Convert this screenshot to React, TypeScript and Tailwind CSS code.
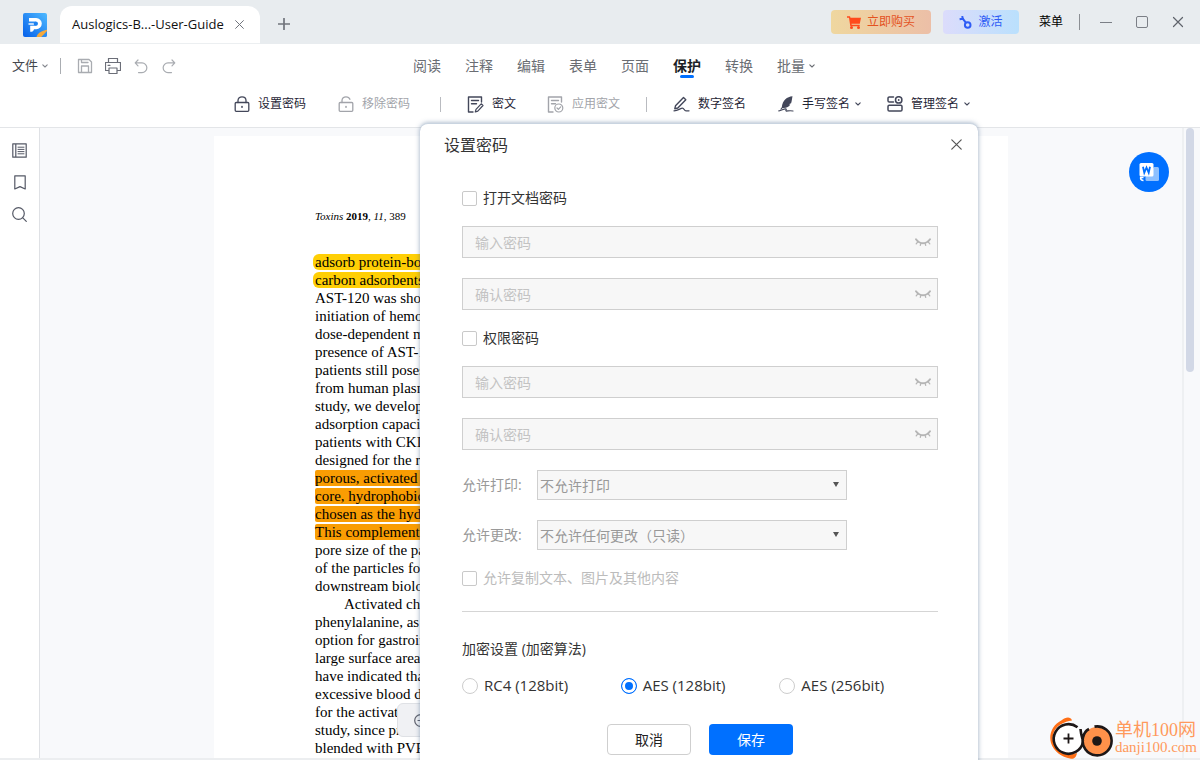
import type { ReactNode } from "react";

const stroke = {
  fill: "none",
  stroke: "currentColor",
  strokeLinecap: "round" as const,
  strokeLinejoin: "round" as const,
};

function Chevron({ className = "" }: { className?: string }) {
  return (
    <svg className={`h-[6px] w-[6px] ${className}`} viewBox="0 0 6 6" {...stroke} strokeWidth={1.1}>
      <path d="M.8 1.8 3 4 5.2 1.8" />
    </svg>
  );
}

function AppLogo() {
  return (
    <svg className="h-6 w-6" viewBox="0 0 24 24" aria-hidden="true">
      <defs>
        <linearGradient id="logo-bg" x1="1" y1="0" x2="0" y2="1">
          <stop offset="0" stopColor="#4fbaff" />
          <stop offset="1" stopColor="#0560ea" />
        </linearGradient>
      </defs>
      <rect width="24" height="24" rx="2" fill="url(#logo-bg)" />
      <path d="M6 5h7.200a5.600 5.600 0 0 1 0 11.200H11c-.2 1.600-1.400 2.600-3.800 2.600v-6h5.600a2.200 2.200 0 0 0 0-4.400H6z" fill="#fff" />
      <path d="M5.500 11h6" stroke="#fff" strokeWidth="1.400" />
      <circle cx="12.600" cy="10.700" r="1.900" fill="#1d80f0" />
      <path d="M13.500 24c1-3.500 4-6 10.500-7.200v1.500L18.500 24z" fill="#f6a93b" />
      <path d="M18.500 24 24 18.300v3.700a2 2 0 0 1-2 2z" fill="#2a8df5" />
    </svg>
  );
}

function LockIcon({ open = false }: { open?: boolean }) {
  return (
    <svg className="h-4 w-4" viewBox="0 0 16 16" {...stroke} strokeWidth={1.3}>
      <rect x="1.200" y="6.500" width="13.600" height="8.800" rx="1" />
      <path d={open ? "M4 6.500V4.500C4 2.300 5.800.8 8 .8c1.900 0 3.400 1 3.900 2.500" : "M4 6.500V4.500C4 2.300 5.800.8 8 .8s4 1.500 4 3.700v2"} />
      <path d="M8 10.600v.6" strokeWidth={1.600} />
    </svg>
  );
}

function RedactIcon() {
  return (
    <svg className="h-[17px] w-[17px]" viewBox="0 0 17 17" {...stroke} strokeWidth={1.4}>
      <path d="M14.500 6V1H1.500v15H6M4.500 4.500h7M4.500 7.800h5" />
      <path d="m8.300 16 .7-2.600 5.200-5.600 1.800 1.700-5.200 5.600z" strokeWidth={1.2} />
    </svg>
  );
}

function ApplyRedactIcon() {
  return (
    <svg className="h-[17px] w-[17px]" viewBox="0 0 17 17" {...stroke} strokeWidth={1.4}>
      <path d="M14.500 6V1H1.500v15H6M4.500 4.500h7M4.500 7.800h4" />
      <circle cx="11.800" cy="12" r="4" strokeWidth={1.2} />
      <path d="m10 12 1.400 1.300 2.300-2.500" strokeWidth={1.200} />
    </svg>
  );
}

function PenIcon() {
  return (
    <svg className="h-4 w-[17px]" viewBox="0 0 17 16" {...stroke} strokeWidth={1.4}>
      <path d="m2.500 9.800 8-8.300 2.300 2.200-8 8.300-3 .7z" />
      <path d="M1 14.800c4 0 6.500-2.600 8.400-2.600s1.600 2.600 3.600 2.600h3" strokeWidth={1.300} />
    </svg>
  );
}

function QuillIcon() {
  return (
    <svg className="h-4 w-4" viewBox="0 0 16 16">
      <path d="M14.500.3C9 .8 4.600 4 3.800 11.200l-1.600 2 .8.6 1.700-1.900c4 .2 6.300-1.100 7.600-3.400l-1.500-.3 2.300-1c.8-2.100.9-4.500 1.400-6.900z" fill="currentColor" />
      <path d="M.8 14.800c2 .3 5-2.300 7-2 1.300.4-.8 2.200.6 2.300 1.500.1 2.500-.8 6.600-.1" {...stroke} strokeWidth={1.200} />
    </svg>
  );
}

function ManageIcon() {
  return (
    <svg className="h-4 w-4" viewBox="0 0 16 16" {...stroke} strokeWidth={1.500}>
      <path d="M6.500 1H2.300A1.300 1.300 0 0 0 1 2.300v2.400A1.300 1.300 0 0 0 2.300 6h4.200" />
      <circle cx="11.700" cy="3.900" r="3.200" />
      <path d="M11.700 3.900v.1" strokeWidth={1.800} />
      <rect x="1" y="9.200" width="14" height="5.800" rx="1.300" />
    </svg>
  );
}

function ClosedEye() {
  return (
    <svg className="h-[9px] w-4" viewBox="0 0 16 9" {...stroke} strokeWidth={1.300}>
      <path d="M1 1.200C3 4 5.500 5.200 8 5.200S13 4 15 1.200" strokeWidth={1.900} />
      <path d="M3 3.700 1.200 5.800M6 5l-.7 2.400M10 5l.7 2.400M13 3.700l1.800 2.100" />
    </svg>
  );
}

function CartIcon() {
  return (
    <svg className="h-[13px] w-[14px]" viewBox="0 0 14 13" fill="#ff4a1c">
      <path d="M0 .2h3l.5 1.500H14l-1.200 6H4.500l.2 1h8v1.500H3.300L2 1.700H0z" />
      <circle cx="4.500" cy="11.500" r="1.500" />
      <circle cx="11.500" cy="11.500" r="1.500" />
    </svg>
  );
}

function KeyIcon() {
  return (
    <svg className="h-[13px] w-[13px]" viewBox="0 0 13 13" fill="none" stroke="#2f5cf5" strokeWidth="2">
      <circle cx="8.700" cy="9" r="2.800" />
      <path d="M7 6.800 3 1.600M.6 3.200l4.400-.8M2.600.3 4 1.600" />
    </svg>
  );
}

const iconButton = "flex h-5 w-5 items-center justify-center";

function TitleBar() {
  return (
    <header className="flex h-11 shrink-0 items-center bg-[#e8ecef] pl-[23px] pr-4 text-[#70747c]">
      <span className="mt-1.5"><AppLogo /></span>
      <div className="ml-[13px] flex h-[38px] w-[200px] items-center self-end rounded-t-xl border-b border-[#eceff1] bg-white px-3">
        <span className="grow whitespace-nowrap text-[13px] text-[#111]">Auslogics-B...-User-Guide</span>
        <button aria-label="关闭标签" className="mr-1 flex h-[10px] w-[10px] items-center justify-center">
          <svg className="h-[9px] w-[9px]" viewBox="0 0 9 9" {...stroke}><path d="m.6.6 7.800 7.800m0-7.800L.6 8.400" /></svg>
        </button>
      </div>
      <button aria-label="新建标签" className="ml-[18px] mt-1">
        <svg className="h-3 w-3" viewBox="0 0 12 12" {...stroke} strokeWidth={1.700}><path d="M6 .5v11M.5 6h11" /></svg>
      </button>
      <div className="grow" />
      <button className="flex h-6 w-[100px] items-center justify-center gap-1.5 rounded bg-linear-to-r from-[#efd79f] to-[#ecbfa7] text-xs text-[#e4521f]">
        <CartIcon />立即购买
      </button>
      <button className="ml-3 flex h-6 w-[76px] items-center justify-center gap-1.5 rounded bg-linear-to-r from-[#dcdcfb] to-[#bae0fd] text-xs text-[#2f5cf5]">
        <KeyIcon />激活
      </button>
      <button className="ml-5 text-xs text-black">菜单</button>
      <span className="ml-4 h-4 w-px bg-[#8b8f94]" />
      <button aria-label="最小化" className="ml-5 flex h-3 w-3 items-center">
        <span className="h-px w-3 bg-[#7b7f86]" />
      </button>
      <button aria-label="最大化" className="ml-6 h-3 w-3 rounded-xs border border-[#7b7f86]" />
      <button aria-label="关闭" className="ml-6 text-[#5f636b]">
        <svg className="h-3 w-3" viewBox="0 0 12 12" {...stroke} strokeWidth={1.200}><path d="m1.500 1.500 9 9m0-9-9 9" /></svg>
      </button>
    </header>
  );
}

const menus = ["阅读", "注释", "编辑", "表单", "页面", "保护", "转换", "批量"];

function MenuBar() {
  return (
    <div className="grid h-11 shrink-0 grid-cols-[1fr_auto_1fr] items-center bg-white">
      <div className="flex items-center pl-3 text-[#a9acb1]">
        <button className="flex items-center gap-1 text-[13px] text-[#44474d]">文件<Chevron className="text-[#85888f]" /></button>
        <span className="ml-3 mr-3.5 h-4 w-px bg-[#aaadb2]" />
        <div className="flex gap-2">
          <button aria-label="保存文件" className={iconButton}>
            <svg className="h-4 w-4" viewBox="0 0 16 16" {...stroke}>
              <path d="M1.500 1.500h10.500l2.500 2.500v10.500h-13zM4.500 1.500v3h6.500M4.500 14.500v-6.500h7v6.500" strokeWidth={1.300} />
            </svg>
          </button>
          <button aria-label="打印" className={`${iconButton} text-[#6b6e78]`}>
            <svg className="h-4 w-4" viewBox="0 0 16 16" {...stroke} strokeWidth={1.200}>
              <path d="M3.500 4.500v-4h9v4M3.500 12.500h-3v-8h15v8h-3M4 10h8v5.500H4zM3 7.300h2" />
            </svg>
          </button>
          <button aria-label="撤销" className={iconButton}>
            <svg className="h-[15px] w-[14px]" viewBox="0 0 14 15" {...stroke} strokeWidth={1.200}>
              <path d="M4 1 1.200 3.900 4 6.800M1.500 3.900H8a4.800 4.800 0 0 1 0 9.700H4.500" />
            </svg>
          </button>
          <button aria-label="重做" className={iconButton}>
            <svg className="h-[15px] w-[14px]" viewBox="0 0 14 15" {...stroke} strokeWidth={1.200}>
              <path d="m10 1 2.800 2.900L10 6.800M12.500 3.900H6a4.800 4.800 0 0 0 0 9.700h3.500" />
            </svg>
          </button>
        </div>
      </div>
      <nav className="flex gap-6 pl-7 text-sm">
        {menus.map((m) => (
          <button key={m} className={m === "保护" ? "relative font-bold text-[#1c1f26]" : "flex items-center gap-1 text-[#6a6d73]"}>
            {m}
            {m === "保护" && <span className="absolute bottom-[-2px] left-[7px] h-[3px] w-[14px] rounded-full bg-[#0070ff]" />}
            {m === "批量" && <Chevron />}
          </button>
        ))}
      </nav>
    </div>
  );
}

function Tool({ icon, label, disabled, menu }: { icon: ReactNode; label: string; disabled?: boolean; menu?: boolean }) {
  return (
    <button disabled={disabled} className={`flex items-center gap-2 text-xs ${disabled ? "text-[#a2a4aa]" : "text-[#43475a]"}`}>
      {icon}
      <span className="flex items-center gap-[5px]">
        <span className={disabled ? "text-[#a2a4aa]" : "text-[#1f2536]"}>{label}</span>
        {menu && <Chevron />}
      </span>
    </button>
  );
}

function Toolbar() {
  return (
    <div className="flex h-10 shrink-0 items-start justify-center gap-[26px] border-b border-[#e3e5e8] bg-white pl-1 pt-1.5">
      <div className="flex h-5 items-center gap-8 pr-1">
        <Tool icon={<LockIcon />} label="设置密码" />
        <Tool icon={<LockIcon open />} label="移除密码" disabled />
      </div>
      <span className="mt-[3px] h-[15px] w-px bg-[#b9bbc0]" />
      <div className="flex h-5 items-center gap-[31px]">
        <Tool icon={<RedactIcon />} label="密文" />
        <Tool icon={<ApplyRedactIcon />} label="应用密文" disabled />
      </div>
      <span className="mt-[3px] h-[15px] w-px bg-[#b9bbc0]" />
      <div className="flex h-5 items-center gap-8">
        <Tool icon={<PenIcon />} label="数字签名" />
        <Tool icon={<QuillIcon />} label="手写签名" menu />
      </div>
      <div className="flex h-5 items-center">
        <Tool icon={<ManageIcon />} label="管理签名" menu />
      </div>
    </div>
  );
}

function Sidebar() {
  return (
    <aside className="flex w-10 shrink-0 flex-col items-center gap-3 border-r border-[#dfe1e5] bg-white pt-3 text-[#555966]">
      <button aria-label="缩略图" className={iconButton}>
        <svg className="h-[15px] w-[15px]" viewBox="0 0 15 15" {...stroke} strokeWidth={1}>
          <path d="M.8.8h13.400v13.400H.8zM3.800.8v13.400" strokeWidth={1.200} />
          <path d="M6 4.200h6M6 6.400h6M6 8.600h6M6 10.800h6" />
        </svg>
      </button>
      <button aria-label="书签" className={iconButton}>
        <svg className="h-[15px] w-3" viewBox="0 0 12 15" {...stroke} strokeWidth={1.200}>
          <path d="M.8.8h10.400v13.200L6 11.600.8 14z" />
        </svg>
      </button>
      <button aria-label="搜索" className={iconButton}>
        <svg className="h-[15px] w-[15px]" viewBox="0 0 15 15" {...stroke} strokeWidth={1.200}>
          <circle cx="6.500" cy="6.500" r="5.800" />
          <path d="m10.800 10.800 3.500 3.500" />
        </svg>
      </button>
    </aside>
  );
}

type Line = { text: string; mark?: "yellow" | "orange"; indent?: boolean };

const lines: Line[] = [
  { text: "adsorb protein-bound", mark: "yellow" },
  { text: "carbon adsorbents", mark: "yellow" },
  { text: "AST-120 was shown" },
  { text: "initiation of hemodialysis" },
  { text: "dose-dependent manner" },
  { text: "presence of AST-120" },
  { text: "patients still poses a" },
  { text: "from human plasma" },
  { text: "study, we developed" },
  { text: "adsorption capacity" },
  { text: "patients with CKD" },
  { text: "designed for the removal" },
  { text: "porous, activated carbon", mark: "orange" },
  { text: "core, hydrophobic", mark: "orange" },
  { text: "chosen as the hydrophilic", mark: "orange" },
  { text: "This complements the", mark: "orange" },
  { text: "pore size of the particles" },
  { text: "of the particles for the" },
  { text: "downstream biological" },
  { text: "Activated charcoal", indent: true },
  { text: "phenylalanine, as well" },
  { text: "option for gastrointestinal" },
  { text: "large surface area and" },
  { text: "have indicated that" },
  { text: "excessive blood dark" },
  { text: "for the activated carbon" },
  { text: "study, since previous" },
  { text: "blended with PVP" },
];

function DocumentPage() {
  return (
    <article className="mx-auto mt-2 h-full w-[794px] max-w-full bg-white pl-[101px] pt-[72px] font-['Liberation_Serif',serif] text-black">
      <p className="text-[11px] leading-4"><i>Toxins</i> <b>2019</b>, <i>11</i>, 389</p>
      <div className="mt-[30px] text-[15px] leading-4">
        {lines.map((l) => (
          <p key={l.text} className={`h-[18px] whitespace-nowrap ${l.indent ? "pl-[29px]" : ""}`}>
            {l.mark ? (
              <mark className={`block h-4 w-3/4 ${l.mark === "yellow" ? "-ml-0.5 rounded-md bg-[#ffcf05] pl-0.5" : "rounded-xs bg-[#f99d03]"}`}>
                {l.text}
              </mark>
            ) : (
              l.text
            )}
          </p>
        ))}
      </div>
    </article>
  );
}

const checkbox = "h-[15px] w-[15px] shrink-0 appearance-none rounded-xs border border-[#c9c9c9] bg-white";

function PasswordField({ id, label }: { id: string; label: string }) {
  return (
    <div className="relative flex h-8">
      <input
        id={id}
        type="password"
        aria-label={label}
        placeholder={label}
        disabled
        className="w-full border border-[#cfcfcf] bg-[#f7f7f7] pl-3 pr-8 pt-px text-sm placeholder:text-[#c3c3c3]"
      />
      <button aria-label="显示密码" className="absolute right-[7px] top-[12px] text-[#b5b5b5]"><ClosedEye /></button>
    </div>
  );
}

function PermissionSelect({ id, label, value }: { id: string; label: string; value: string }) {
  return (
    <div className="flex h-[30px] items-center">
      <label htmlFor={id} className="w-[75px] text-sm text-[#999]">{label}</label>
      <div className="relative h-full w-[310px]">
        <select id={id} disabled className="h-full w-full appearance-none border border-[#cfcfcf] bg-[#f7f7f7] pl-0.5 pt-px text-sm text-[#999] opacity-100">
          <option>{value}</option>
        </select>
        <svg className="pointer-events-none absolute right-2 top-3 h-[5px] w-[6px]" viewBox="0 0 6 5" fill="#555"><path d="M0 0h6L3 5z" /></svg>
      </div>
    </div>
  );
}

function PasswordDialog() {
  return (
    <section
      role="dialog"
      aria-labelledby="dialog-title"
      className="absolute left-[35%] top-[123px] w-[558px] rounded-lg border-t border-[#c9d4e0] bg-white pb-8 text-sm text-[#333] shadow-[0_0_5px_rgba(70,100,140,0.55)]"
    >
      <div className="flex h-[42px] items-center justify-between pl-6 pr-4">
        <h2 id="dialog-title" className="text-base text-[#333]">设置密码</h2>
        <button aria-label="关闭对话框" className="mb-0.5 text-[#555]">
          <svg className="h-[11px] w-[11px]" viewBox="0 0 11 11" {...stroke} strokeWidth={1.200}><path d="m.8.8 9.400 9.400m0-9.400L.8 10.200" /></svg>
        </button>
      </div>
      <form className="pl-[42px] pr-10 pt-[22px]" onSubmit={(e) => e.preventDefault()}>
        <label className="flex h-5 items-center gap-1.5"><input type="checkbox" className={checkbox} />打开文档密码</label>
        <div className="mt-[18px] flex flex-col gap-5">
          <PasswordField id="open-password" label="输入密码" />
          <PasswordField id="open-confirm" label="确认密码" />
        </div>
        <label className="mt-[18px] flex h-5 items-center gap-1.5"><input type="checkbox" className={checkbox} />权限密码</label>
        <div className="mt-[18px] flex flex-col gap-5">
          <PasswordField id="permission-password" label="输入密码" />
          <PasswordField id="permission-confirm" label="确认密码" />
          <PermissionSelect id="allow-print" label="允许打印:" value="不允许打印" />
          <PermissionSelect id="allow-change" label="允许更改:" value="不允许任何更改（只读）" />
        </div>
        <label className="mt-[18px] flex h-5 items-center gap-1.5 text-[#bcbcbc]">
          <input type="checkbox" disabled className={checkbox} />允许复制文本、图片及其他内容
        </label>
        <hr className="mt-[23px] border-[#d5d5d5]" />
        <fieldset>
          <legend className="pt-[27px] leading-5">加密设置 (加密算法)</legend>
          <div className="mt-4 grid h-5 grid-cols-3 items-center text-[15px]">
            {["RC4 (128bit)", "AES (128bit)", "AES (256bit)"].map((name, i) => (
              <label key={name} className="flex items-center gap-1.5">
                <input
                  type="radio"
                  name="algorithm"
                  defaultChecked={i === 1}
                  className="h-4 w-4 appearance-none rounded-full border border-[#cdcdcd] bg-white checked:border-[#0070ff] checked:bg-[#0070ff] checked:shadow-[inset_0_0_0_3px_white]"
                />
                {name}
              </label>
            ))}
          </div>
        </fieldset>
        <div className="mt-[29px] flex justify-center gap-[18px]">
          <button type="button" className="h-[31px] w-[84px] rounded border border-[#cfcfcf] bg-white text-[#222]">取消</button>
          <button type="submit" className="h-[31px] w-[84px] rounded bg-[#0070ff] text-white">保存</button>
        </div>
      </form>
    </section>
  );
}

function SiteBadge() {
  return (
    <div className="absolute bottom-0 right-[3px] flex items-center gap-[2px] text-[#ff995c]">
      <svg className="h-11 w-[63px]" viewBox="0 0 63 44" aria-hidden="true">
        <path d="M22 4.500C20.500 0 15 1.500 12 4 2 9-1.500 19 1 27c2.500 8.500 11 14 19 15.500 3 .6 6 .3 7-5.500-8 3-17 1.500-21.500-5.500C0 23 3 13 10.500 8.500 14.500 6 18 5 22 4.500z" fill="#ff6f16" />
        <circle cx="18.500" cy="22.500" r="14" fill="#fff" />
        <path d="M27.500 11.200A14.800 14.800 0 1 0 33 26" fill="none" stroke="#1d1717" strokeWidth="2.600" />
        <path d="M18.500 17.500v10M13.500 22.500h10" stroke="#1d1717" strokeWidth="1.800" />
        <circle cx="47" cy="25" r="14" fill="#ff914a" />
        <path d="M44.500 10.600A14.500 14.500 0 1 1 33 21.500c.8-4 3-7 6-8.500M30.500 13c.3 5 1.300 8 2.500 12" fill="none" stroke="#1d1717" strokeWidth="2.600" />
        <circle cx="47" cy="25" r="4.800" fill="#1d1717" />
      </svg>
      <div className="flex flex-col whitespace-nowrap font-['Liberation_Serif','Noto_Sans_CJK_SC',serif]">
        <p className="h-[19px] text-lg leading-5">单机100网</p>
        <p className="h-[18px] text-[15px] leading-4">danji100.com</p>
      </div>
    </div>
  );
}

export default function App() {
  return (
    <div className="relative flex h-screen flex-col overflow-hidden bg-white font-['Open_Sans','Noto_Sans_CJK_SC',sans-serif]">
      <TitleBar />
      <MenuBar />
      <Toolbar />
      <main className="flex min-h-0 grow border-b-2 border-[#eceef0]">
        <Sidebar />
        <div className="relative min-w-0 grow overflow-hidden border-r-2 border-[#eef0f2] bg-[#f8f9fb]">
          <DocumentPage />
          <button aria-label="转换为Word" className="absolute right-[13px] top-6 flex h-10 w-10 items-center justify-center rounded-full bg-[#0070ff]">
            <svg className="h-5 w-5" viewBox="0 0 20 20">
              <path d="M15 5h3.500A1.500 1.500 0 0 1 20 6.500v11a1.500 1.500 0 0 1-1.500 1.500H8a1.500 1.500 0 0 1-1.500-1.500V15" fill="#8dc0ff" />
              <rect x=".5" y="1" width="14" height="13.500" rx="1.500" fill="#fff" />
              <path d="m4 4.800 1.300 6L7.500 5.500l2.200 5.300 1.300-6" fill="none" stroke="#0070ff" strokeWidth="1.800" />
              <path d="M1 15.500h3.500M1.500 15.500c0 2 1 3 3 3" fill="none" stroke="#fff" strokeWidth="1.500" />
            </svg>
          </button>
        </div>
        <div className="w-4 shrink-0 bg-[#f8f9fb] pl-0.5">
          <div className="h-[244px] w-2 rounded-full bg-[#d2d8e6]" />
        </div>
      </main>
      <div className="absolute bottom-[23px] left-[397px] flex h-[34px] w-60 items-center rounded-md border border-[#dfe1e5] bg-[#f0f1f4] pl-4 text-[#5d606b]">
        <button aria-label="缩小">
          <svg className="h-[13px] w-[13px]" viewBox="0 0 13 13" {...stroke} strokeWidth={1.200}><circle cx="6.500" cy="6.500" r="5.800" /><path d="M4 6.500h5" /></svg>
        </button>
      </div>
      <PasswordDialog />
      <SiteBadge />
    </div>
  );
}
